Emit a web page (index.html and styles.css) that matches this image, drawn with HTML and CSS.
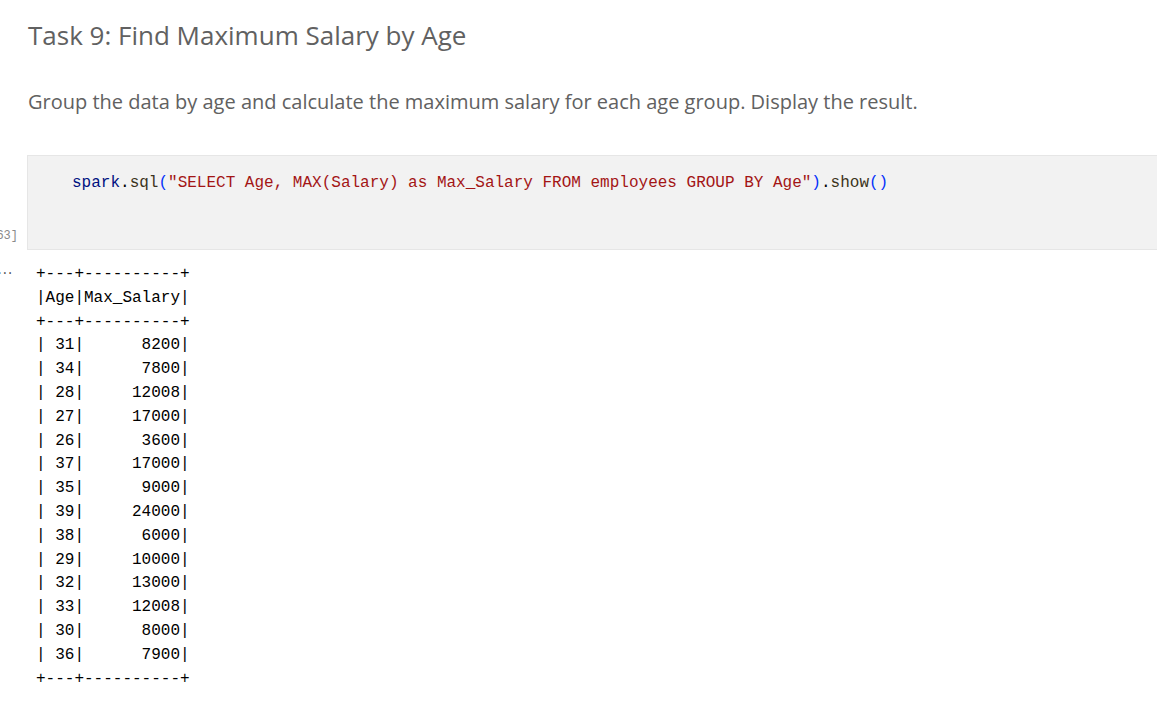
FILE: index.html
```html
<!DOCTYPE html>
<html>
<head>
<meta charset="utf-8">
<link rel="stylesheet" href="styles.css">
</head>
<body>
<div class="notebook">
  <div class="md-cell">
    <h2 class="md-title">Task 9: Find Maximum Salary by Age</h2>
    <p class="md-text">Group the data by age and calculate the maximum salary for each age group. Display the result.</p>
  </div>
  <div class="code-cell">
    <div class="exec-count">63]</div>
    <div class="code-box"><code class="code-line"><span class="tok-var">spark</span><span class="tok-plain">.</span><span class="tok-fn">sql</span><span class="tok-br">(</span><span class="tok-str">"SELECT Age, MAX(Salary) as Max_Salary FROM employees GROUP BY Age"</span><span class="tok-br">)</span><span class="tok-plain">.</span><span class="tok-fn">show</span><span class="tok-br">()</span></code></div>
  </div>
  <div class="output-cell">
    <div class="output-gutter">...</div>
    <pre class="output-text">+---+----------+
|Age|Max_Salary|
+---+----------+
| 31|      8200|
| 34|      7800|
| 28|     12008|
| 27|     17000|
| 26|      3600|
| 37|     17000|
| 35|      9000|
| 39|     24000|
| 38|      6000|
| 29|     10000|
| 32|     13000|
| 33|     12008|
| 30|      8000|
| 36|      7900|
+---+----------+</pre>
  </div>
</div>
</body>
</html>
```

FILE: styles.css
```css
html, body {
  margin: 0;
  padding: 0;
  background: #ffffff;
}

.notebook {
  width: 1157px;
  height: 707px;
  overflow: hidden;
}

.md-cell {
  padding-left: 28px;
  font-family: "Open Sans", "Noto Sans", sans-serif;
  color: #616161;
}

.md-title {
  margin: 0;
  padding-top: 16px;
  font-size: 26px;
  font-weight: 400;
  line-height: 38px;
}

.md-text {
  margin: 0;
  padding-top: 34px;
  font-size: 20px;
  line-height: 28px;
}

.code-cell {
  display: flex;
  margin-top: 39px;
  height: 95px;
}

.exec-count {
  flex: none;
  box-sizing: border-box;
  width: 36px;
  margin-left: -9px;
  padding: 0 9px 6px 0;
  align-self: flex-end;
  font-family: "Liberation Mono", monospace;
  font-size: 12px;
  line-height: 16px;
  color: #8a8a8a;
  text-align: right;
}

.code-box {
  flex: 1;
  background: #f2f2f2;
  border: 1px solid #e6e6e6;
  border-right: none;
  padding: 15px 0 0 44px;
}

.code-line {
  font-family: "Liberation Mono", monospace;
  font-size: 16px;
  line-height: 24px;
  white-space: pre;
}

.tok-var { color: #001080; }
.tok-plain { color: #000000; }
.tok-fn { color: #3b3320; }
.tok-br { color: #0431fa; }
.tok-str { color: #a31515; }

.output-cell {
  display: flex;
  margin-top: 13px;
}

.output-gutter {
  flex: none;
  width: 40px;
  margin-left: -4px;
  padding-top: 1px;
  font-family: "Liberation Mono", monospace;
  font-size: 12px;
  line-height: 14px;
  color: #555555;
  letter-spacing: -2px;
}

.output-text {
  margin: 0;
  font-family: "Liberation Mono", monospace;
  font-size: 16px;
  line-height: 23.8px;
  color: #000000;
}
```
